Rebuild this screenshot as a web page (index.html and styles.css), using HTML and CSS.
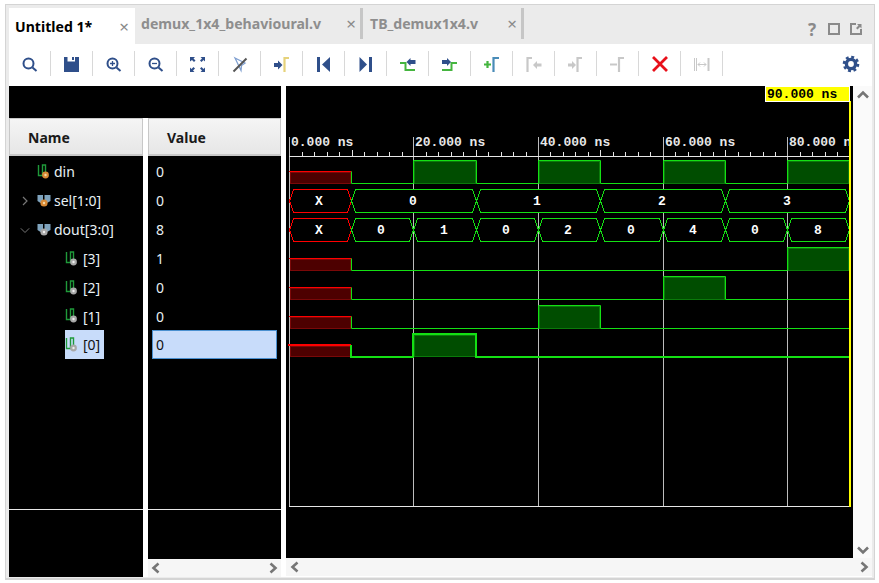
FILE: index.html
```html
<!DOCTYPE html>
<html lang="en">
<head>
  <meta charset="UTF-8">
  <title>Untitled 1</title>
  <link rel="stylesheet" href="styles.css">
</head>
<body>
  <svg class="defs">
    <symbol id="sig-v" viewBox="0 0 14 16">
      <path d="M1.5 1V11.5H5.5V1H8.5V8" fill="none" stroke="#1f9a3a" stroke-width="1.4"/>
      <circle cx="8.5" cy="11" r="3.4" fill="#d98a35"/>
      <circle cx="8.5" cy="11" r="1.2" fill="#f4d9a8"/>
    </symbol>
    <symbol id="sig-g" viewBox="0 0 14 16">
      <path d="M1.5 1V11.5H5.5V1H8.5V8" fill="none" stroke="#1f9a3a" stroke-width="1.4"/>
      <circle cx="8.5" cy="11" r="3.4" fill="#a8a8a8"/>
      <circle cx="8.5" cy="11" r="1.2" fill="#efefef"/>
    </symbol>
    <symbol id="bus-v" viewBox="0 0 14 14">
      <path d="M0.5 1H6V6H7.5V1H13.5V7L10 9H3.5L0.5 7Z" fill="#7fa3bd"/>
      <circle cx="7" cy="9" r="3.6" fill="#d98a35"/>
      <circle cx="7" cy="9" r="1.2" fill="#f4d9a8"/>
    </symbol>
    <symbol id="bus-g" viewBox="0 0 14 14">
      <path d="M0.5 1H6V6H7.5V1H13.5V7L10 9H3.5L0.5 7Z" fill="#7fa3bd"/>
      <circle cx="7" cy="9" r="3.6" fill="#a8a8a8"/>
      <circle cx="7" cy="9" r="1.2" fill="#efefef"/>
    </symbol>
  </svg>

  <div class="window">
    <div class="tabs">
      <div class="tab active"><span class="tab-name">Untitled 1*</span><span class="tab-x">×</span></div>
      <div class="tab second"><span class="tab-name">demux_1x4_behavioural.v</span><span class="tab-x">×</span></div>
      <div class="tab third"><span class="tab-name">TB_demux1x4.v</span><span class="tab-x">×</span></div>
      <div class="tab-tools">
        <span class="help">?</span>
        <svg width="14" height="14" viewBox="0 0 14 14"><rect x="2" y="2" width="10" height="10" fill="none" stroke="#8a8a8a" stroke-width="2"/></svg>
        <svg width="14" height="14" viewBox="0 0 14 14"><path d="M7 2H2V12H12V7" fill="none" stroke="#8a8a8a" stroke-width="2"/><path d="M8 2H12.5V6.5L11 5L8.5 7.5L7 6L9.5 3.5Z" fill="#8a8a8a"/></svg>
      </div>
    </div>

    <div class="toolbar">
      <div class="tool">
        <svg viewBox="0 0 20 20"><circle cx="8.5" cy="9.5" r="5" class="navy-line"/><path d="M12.5 13.5L16.5 17" class="navy-line"/></svg>
      </div>
      <div class="tool">
        <svg viewBox="0 0 20 20"><path d="M2 3H5.5V7.5H13V3H17V18H2Z" class="navy"/><rect x="10" y="3" width="2" height="3" class="navy"/></svg>
      </div>
      <div class="tool">
        <svg viewBox="0 0 20 20"><circle cx="8.5" cy="9.5" r="5" class="navy-line"/><path d="M12.5 13.5L16.5 17" class="navy-line"/><path d="M6 9.5H11M8.5 7V12" fill="none" stroke="#2f4f8a" stroke-width="1.3"/></svg>
      </div>
      <div class="tool">
        <svg viewBox="0 0 20 20"><circle cx="8.5" cy="9.5" r="5" class="navy-line"/><path d="M12.5 13.5L16.5 17" class="navy-line"/><path d="M6 9.5H11" fill="none" stroke="#2f4f8a" stroke-width="1.3"/></svg>
      </div>
      <div class="tool">
        <svg viewBox="0 0 20 20"><path d="M2 3H7L5.5 4.5L7.5 6.5L6 8L4 6L2 7.5ZM17 3V7.5L15.5 6L13.5 8L12 6.5L14 4.5L12.5 3ZM2 18V13.5L3.5 15L5.5 13L7 14.5L5 16.5L6.5 18ZM17 18H12.5L14 16.5L12 14.5L13.5 13L15.5 15L17 13.5Z" class="navy"/></svg>
      </div>
      <div class="tool">
        <svg viewBox="0 0 20 20"><path d="M5 4L15 9L11.5 11.5L11 16.5Z" fill="none" stroke="#7f9fd0" stroke-width="1.3"/><path d="M3.5 17.5L16.5 4.5" fill="none" stroke="#555" stroke-width="2"/></svg>
      </div>
      <div class="tool">
        <svg viewBox="0 0 20 20"><path d="M2 9H6V6.5L10.5 11L6 15.5V13H2Z" class="navy"/><path d="M12.5 18V4H17" fill="none" stroke="#e6d27a" stroke-width="2.2"/></svg>
      </div>
      <div class="tool">
        <svg viewBox="0 0 20 20"><rect x="3" y="3" width="3" height="15" class="navy"/><path d="M16 3V18L8 10.5Z" class="navy"/></svg>
      </div>
      <div class="tool">
        <svg viewBox="0 0 20 20"><path d="M3.5 3V18L11 10.5Z" class="navy"/><rect x="13" y="3" width="3" height="15" class="navy"/></svg>
      </div>
      <div class="tool">
        <svg viewBox="0 0 20 20"><path d="M2 9H7.5V16H17" fill="none" stroke="#45b53f" stroke-width="2"/><path d="M8.5 8L12.5 4V6H17.5V10H12.5V12Z" class="navy"/></svg>
      </div>
      <div class="tool">
        <svg viewBox="0 0 20 20"><path d="M2 16H11.5V9H17" fill="none" stroke="#45b53f" stroke-width="2"/><path d="M2 6H7V4L11 8L7 12V10H2Z" class="navy"/></svg>
      </div>
      <div class="tool">
        <svg viewBox="0 0 20 20"><path d="M2 10.5H9M5.5 7V14" fill="none" stroke="#45b53f" stroke-width="2.2"/><path d="M11.5 18V4H17" fill="none" stroke="#4a8cb8" stroke-width="2.2"/></svg>
      </div>
      <div class="tool">
        <svg viewBox="0 0 20 20"><path d="M3.5 18V4H8" fill="none" stroke="#c8c8c8" stroke-width="2.2"/><path d="M17.5 9.5H13V7L9 11L13 15V12.5H17.5Z" fill="#c8c8c8"/></svg>
      </div>
      <div class="tool">
        <svg viewBox="0 0 20 20"><path d="M2 9.5H6V7L10 11L6 15V12.5H2Z" fill="#c8c8c8"/><path d="M11.5 18V4H16" fill="none" stroke="#c8c8c8" stroke-width="2.2"/></svg>
      </div>
      <div class="tool">
        <svg viewBox="0 0 20 20"><path d="M2 10.5H9" fill="none" stroke="#c8c8c8" stroke-width="2"/><path d="M11 18V4H16" fill="none" stroke="#c8c8c8" stroke-width="2.2"/></svg>
      </div>
      <div class="tool">
        <svg viewBox="0 0 20 20"><path d="M3 3L17 17M17 3L3 17" fill="none" stroke="#e8101a" stroke-width="2.8"/></svg>
      </div>
      <div class="tool">
        <svg viewBox="0 0 20 20"><path d="M2.5 4V17M4.5 4V17" fill="none" stroke="#c8c8c8" stroke-width="1"/><path d="M6 10.5H14M6 10.5L8 8.5M6 10.5L8 12.5M14 10.5L12 8.5M14 10.5L12 12.5" fill="none" stroke="#c8c8c8" stroke-width="1"/><path d="M16.5 4V17" fill="none" stroke="#c8c8c8" stroke-width="2"/></svg>
      </div>
      <div class="tool-gear">
        <svg width="20" height="20" viewBox="0 0 20 20">
          <circle cx="10" cy="10" r="4.6" fill="none" stroke="#2f4f8a" stroke-width="3.4"/>
          <circle cx="10" cy="10" r="7" fill="none" stroke="#2f4f8a" stroke-width="2.6" stroke-dasharray="2.9 2.6"/>
        </svg>
      </div>
    </div>

    <div class="main">
      <div class="left-pane">
        <div class="top-strip"></div>
        <div class="columns">
          <div class="col name-col">
            <div class="col-head">Name</div>
            <div class="rows">
              <div class="row lvl-0"><span class="arrow"></span><svg class="sig"><use href="#sig-v"/></svg><span class="label">din</span></div>
              <div class="row lvl-0"><span class="arrow"><svg width="10" height="12" viewBox="0 0 10 12"><path d="M3 2L7 6L3 10" class="chev-thin"/></svg></span><svg class="sig"><use href="#bus-v"/></svg><span class="label">sel[1:0]</span></div>
              <div class="row lvl-0"><span class="arrow"><svg width="12" height="10" viewBox="0 0 12 10"><path d="M1 3L6 8L11 3" class="chev-thin"/></svg></span><svg class="sig"><use href="#bus-g"/></svg><span class="label">dout[3:0]</span></div>
              <div class="row lvl-1"><svg class="sig"><use href="#sig-g"/></svg><span class="label">[3]</span></div>
              <div class="row lvl-1"><svg class="sig"><use href="#sig-g"/></svg><span class="label">[2]</span></div>
              <div class="row lvl-1"><svg class="sig"><use href="#sig-g"/></svg><span class="label">[1]</span></div>
              <div class="row lvl-1"><div class="picked"><svg class="sig"><use href="#sig-g"/></svg><span class="label">[0]</span></div></div>
            </div>
            <div class="col-foot name-foot"></div>
          </div>
          <div class="col value-col">
            <div class="col-head">Value</div>
            <div class="rows">
              <div class="row value">0</div>
              <div class="row value">0</div>
              <div class="row value">8</div>
              <div class="row value">1</div>
              <div class="row value">0</div>
              <div class="row value">0</div>
              <div class="row value picked-value">0</div>
            </div>
            <div class="col-foot value-foot"></div>
            <div class="hscroll">
              <svg width="12" height="14" viewBox="0 0 12 14"><path d="M8.5 2.5L3.5 7L8.5 11.5" class="chev"/></svg>
              <svg width="12" height="14" viewBox="0 0 12 14"><path d="M3.5 2.5L8.5 7L3.5 11.5" class="chev"/></svg>
            </div>
          </div>
        </div>
      </div>

      <div class="right-pane">
        <div class="wave-area">
          <svg class="wave" viewBox="286 86 567 472">
            <defs>
              <clipPath id="inside"><rect x="286" y="86" width="563" height="472"/></clipPath>
            </defs>

            <path class="grid" d="M289.5 137V506M413.5 137V506M538.5 137V506M663.5 137V506M787.5 137V506"/>
            <path class="frame" d="M289 506.5H850M289 156.5H850"/>
            <path class="frame" d="M302.5 152V156M314.5 152V156M327.5 152V156M339.5 152V156M352.5 150V156M364.5 152V156M377.5 152V156M389.5 152V156M402.5 152V156
              M426.5 152V156M438.5 152V156M451.5 152V156M463.5 152V156M476.5 150V156M488.5 152V156M501.5 152V156M513.5 152V156M526.5 152V156
              M550.5 152V156M563.5 152V156M575.5 152V156M588.5 152V156M600.5 150V156M613.5 152V156M625.5 152V156M638.5 152V156M650.5 152V156
              M675.5 152V156M688.5 152V156M700.5 152V156M713.5 152V156M725.5 150V156M738.5 152V156M750.5 152V156M763.5 152V156M775.5 152V156
              M800.5 152V156M812.5 152V156M825.5 152V156M837.5 152V156"/>

            <g class="time" clip-path="url(#inside)">
              <text x="291" y="146">0.000 ns</text>
              <text x="415" y="146">20.000 ns</text>
              <text x="540" y="146">40.000 ns</text>
              <text x="665" y="146">60.000 ns</text>
              <text x="789" y="146">80.000 ns</text>
            </g>

            <!-- din -->
            <rect class="red-fill" x="290.5" y="172.5" width="60" height="11"/>
            <path class="red-line" d="M289 171.5H351.5"/>
            <rect class="green-fill" x="414.5" y="161.5" width="61" height="22"/>
            <rect class="green-fill" x="539.5" y="161.5" width="60" height="22"/>
            <rect class="green-fill" x="664.5" y="161.5" width="60" height="22"/>
            <rect class="green-fill" x="788.5" y="161.5" width="60" height="22"/>
            <path class="green-line" d="M351.5 171.5V183.5H413.5V160.5H476.5V183.5H538.5V160.5H600.5V183.5H663.5V160.5H725.5V183.5H787.5V160.5H849"/>

            <!-- sel[1:0] -->
            <path class="red-bus" d="M289.5 201L293.5 189.5H347.5L351.5 201L347.5 212.5H293.5Z"/>
            <path class="green-bus" d="M351.5 201L355.5 189.5H472.5L476.5 201L472.5 212.5H355.5Z"/>
            <path class="green-bus" d="M476.5 201L480.5 189.5H596.5L600.5 201L596.5 212.5H480.5Z"/>
            <path class="green-bus" d="M600.5 201L604.5 189.5H721.5L725.5 201L721.5 212.5H604.5Z"/>
            <path class="green-bus" d="M725.5 201L729.5 189.5H845.5L849.5 201L845.5 212.5H729.5Z"/>
            <g class="bus-text">
              <text x="319" y="205">X</text>
              <text x="413" y="205">0</text>
              <text x="537" y="205">1</text>
              <text x="662" y="205">2</text>
              <text x="787" y="205">3</text>
            </g>

            <!-- dout[3:0] -->
            <path class="red-bus" d="M289.5 230L293.5 218.5H347.5L351.5 230L347.5 241.5H293.5Z"/>
            <path class="green-bus" d="M351.5 230L355.5 218.5H409.5L413.5 230L409.5 241.5H355.5Z"/>
            <path class="green-bus" d="M413.5 230L417.5 218.5H472.5L476.5 230L472.5 241.5H417.5Z"/>
            <path class="green-bus" d="M476.5 230L480.5 218.5H534.5L538.5 230L534.5 241.5H480.5Z"/>
            <path class="green-bus" d="M538.5 230L542.5 218.5H596.5L600.5 230L596.5 241.5H542.5Z"/>
            <path class="green-bus" d="M600.5 230L604.5 218.5H659.5L663.5 230L659.5 241.5H604.5Z"/>
            <path class="green-bus" d="M663.5 230L667.5 218.5H721.5L725.5 230L721.5 241.5H667.5Z"/>
            <path class="green-bus" d="M725.5 230L729.5 218.5H783.5L787.5 230L783.5 241.5H729.5Z"/>
            <path class="green-bus" d="M787.5 230L791.5 218.5H845.5L849.5 230L845.5 241.5H791.5Z"/>
            <g class="bus-text">
              <text x="319" y="234">X</text>
              <text x="381" y="234">0</text>
              <text x="444" y="234">1</text>
              <text x="506" y="234">0</text>
              <text x="568" y="234">2</text>
              <text x="631" y="234">0</text>
              <text x="693" y="234">4</text>
              <text x="755" y="234">0</text>
              <text x="818" y="234">8</text>
            </g>

            <!-- [3] -->
            <rect class="red-fill" x="290.5" y="259.5" width="60" height="11"/>
            <path class="red-line" d="M289 258.5H351.5"/>
            <rect class="green-fill" x="788.5" y="248.5" width="60" height="22"/>
            <path class="green-line" d="M351.5 258.5V270.5H787.5V247.5H849"/>

            <!-- [2] -->
            <rect class="red-fill" x="290.5" y="288.5" width="60" height="11"/>
            <path class="red-line" d="M289 287.5H351.5"/>
            <rect class="green-fill" x="664.5" y="277.5" width="60" height="22"/>
            <path class="green-line" d="M351.5 287.5V299.5H663.5V276.5H725.5V299.5H849"/>

            <!-- [1] -->
            <rect class="red-fill" x="290.5" y="317.5" width="60" height="11"/>
            <path class="red-line" d="M289 316.5H351.5"/>
            <rect class="green-fill" x="539.5" y="306.5" width="60" height="22"/>
            <path class="green-line" d="M351.5 316.5V328.5H538.5V305.5H600.5V328.5H849"/>

            <!-- [0] selected, drawn heavier -->
            <rect class="red-fill" x="290.5" y="346.5" width="60" height="10"/>
            <path class="red-line thick" d="M288 345H351"/>
            <rect class="green-fill" x="414.5" y="335.5" width="61" height="21"/>
            <path class="green-line thick" d="M351 345V357H413V334H476V357H849"/>

            <rect class="cursor-line" x="849" y="101" width="2" height="406"/>
            <rect class="cursor-box" x="765.5" y="86.5" width="84" height="15"/>
            <text class="cursor-text" x="767" y="98">90.000 ns</text>
          </svg>
        </div>
        <div class="vscroll">
          <svg width="14" height="12" viewBox="0 0 14 12"><path d="M2 8.5L7 3.5L12 8.5" class="chev"/></svg>
          <svg width="14" height="12" viewBox="0 0 14 12"><path d="M2 3.5L7 8.5L12 3.5" class="chev"/></svg>
        </div>
        <div class="hscroll wide">
          <svg width="12" height="14" viewBox="0 0 12 14"><path d="M8.5 2.5L3.5 7L8.5 11.5" class="chev"/></svg>
          <svg width="12" height="14" viewBox="0 0 12 14"><path d="M3.5 2.5L8.5 7L3.5 11.5" class="chev"/></svg>
        </div>
      </div>
    </div>
  </div>
</body>
</html>
```

FILE: styles.css
```css
html, body {
  margin: 0;
  padding: 0;
  background: #fff;
}

body {
  font-family: "Noto Sans", sans-serif;
  font-size: 14px;
}

.defs {
  display: none;
}

.window {
  box-sizing: border-box;
  width: 870px;
  height: 576px;
  margin: 4px 0 0 5px;
  padding: 0 2px 2px 3px;
  background: #ebebeb;
  border: 1px solid #d4d4d4;
  border-bottom: 2px solid #d4d4d4;
}

/* tabs */
.tabs {
  display: flex;
  height: 39px;
  padding-top: 3px;
  box-sizing: border-box;
}

.tab {
  display: flex;
  align-items: center;
  justify-content: space-between;
  box-sizing: border-box;
  height: 36px;
  padding: 0 4px 0 6px;
  font-weight: bold;
  color: #8e8e8e;
}

.tab-name {
  font-size: 14.1px;
}

.tab-x {
  font-weight: normal;
  font-size: 17px;
  color: #8a8a8a;
}

.tab.active {
  width: 126px;
  padding-right: 6px;
  background: #fff;
  color: #000;
}

.tab.second {
  width: 228px;
}

.tab.third {
  width: 161px;
  padding-left: 7px;
}

.tab.second, .tab.third {
  height: 31px;
  border-right: 3px solid #c6c6c6;
}

.tab-tools {
  display: flex;
  align-items: center;
  gap: 8px;
  margin: 6px 9px 0 auto;
  height: 30px;
}

.help {
  width: 14px;
  text-align: center;
  font-size: 17px;
  font-weight: bold;
  color: #8a8a8a;
}

/* toolbar */
.toolbar {
  display: flex;
  align-items: center;
  height: 39px;
  background: #fff;
}

.tool {
  display: flex;
  align-items: center;
  justify-content: center;
  box-sizing: border-box;
  width: 42px;
  height: 25px;
  border-right: 1px solid #d8d8d8;
}

.tool svg {
  width: 20px;
  height: 20px;
}

.tool-gear {
  display: flex;
  margin: 0 11px 0 auto;
}

.navy {
  fill: #2f4f8a;
}

.navy-line {
  fill: none;
  stroke: #2f4f8a;
  stroke-width: 2;
}

/* main area */
.main {
  display: flex;
  height: 494px;
  padding-top: 3px;
  box-sizing: border-box;
  background: #fff;
}

.left-pane {
  width: 272px;
  display: flex;
  flex-direction: column;
}

.top-strip {
  height: 32px;
  background: #000;
}

.columns {
  display: flex;
  gap: 5px;
  flex: 1;
}

.col {
  display: flex;
  flex-direction: column;
  background: #000;
}

.name-col {
  width: 134px;
}

.value-col {
  width: 133px;
}

.col-head {
  box-sizing: border-box;
  height: 38px;
  display: flex;
  align-items: center;
  padding: 1px 0 0 18px;
  font-weight: bold;
  color: #1a1a1a;
  background: linear-gradient(#f5f5f5, #e6e6e6);
  border: 1px solid #c8c8c8;
  border-width: 1px 1px 2px 1px;
}

.rows {
  padding-top: 1px;
}

.row {
  display: flex;
  align-items: center;
  height: 29px;
  color: #e8f0f4;
}

.row:nth-child(6) {
  height: 28px;
}

.lvl-0 {
  padding-left: 11px;
}

.lvl-1 {
  padding-left: 56px;
}

.arrow {
  display: flex;
  justify-content: center;
  width: 10px;
  margin-right: 7px;
}

.sig {
  width: 14px;
  height: 16px;
  flex: none;
}

.label {
  margin-left: 3px;
}

.lvl-1 .label {
  margin-left: 4px;
}

.picked {
  display: flex;
  align-items: center;
  height: 100%;
  padding-right: 4px;
  color: #111;
  background: #c8dcfa;
}

.value {
  padding-left: 8px;
}

.picked-value {
  box-sizing: border-box;
  width: 125px;
  margin-left: 4px;
  padding-left: 3px;
  color: #111;
  background: #c8dcfa;
  border: 1px solid #4a90d0;
}

.col-foot {
  margin-top: auto;
  border-top: 1px solid #e8e8e8;
}

.name-foot {
  height: 67px;
}

.value-foot {
  height: 49px;
}

/* scrollbars */
.hscroll {
  display: flex;
  align-items: center;
  justify-content: space-between;
  height: 18px;
  padding: 0 2px;
  background: #f6f6f6;
}

.chev {
  fill: none;
  stroke: #767676;
  stroke-width: 2.6;
}

.chev-thin {
  fill: none;
  stroke: #777;
  stroke-width: 1.2;
}

.right-pane {
  margin-left: 5px;
  flex: 1;
  display: grid;
  grid-template-columns: 567px 1fr;
  grid-template-rows: 472px 1fr;
}

.wave-area {
  background: #000;
  height: 472px;
}

.wave {
  display: block;
  width: 567px;
  height: 472px;
}

.vscroll {
  display: flex;
  flex-direction: column;
  align-items: center;
  justify-content: space-between;
  padding: 3px 0 2px;
  background: #fafafa;
}

.hscroll.wide {
  grid-column: 1 / 3;
  padding: 0 2px 0 3px;
}

/* waveform drawing */
.grid {
  fill: none;
  stroke: #bdbdbd;
  stroke-width: 1;
}

.frame {
  fill: none;
  stroke: #e6e6e6;
  stroke-width: 1;
}

.time text {
  font-family: "Liberation Mono", monospace;
  font-weight: bold;
  font-size: 13px;
  fill: #e8e8e8;
}

.red-fill {
  fill: #4d0000;
  stroke: #7a0808;
}

.green-fill {
  fill: #004d00;
  stroke: #0a7a0a;
}

.red-line {
  fill: none;
  stroke: #ff0000;
  stroke-width: 1;
}

.green-line {
  fill: none;
  stroke: #14e014;
  stroke-width: 1;
}

.thick {
  stroke-width: 2;
}

.red-bus {
  fill: #000;
  stroke: #ff0000;
  stroke-width: 1;
  shape-rendering: crispEdges;
}

.green-bus {
  fill: #000;
  stroke: #14e014;
  stroke-width: 1;
  shape-rendering: crispEdges;
}

.bus-text text {
  font-family: "Liberation Mono", monospace;
  font-weight: bold;
  font-size: 13px;
  fill: #fff;
  text-anchor: middle;
}

.cursor-line {
  fill: #ffff00;
}

.cursor-box {
  fill: #ffff00;
  stroke: #fff;
}

.cursor-text {
  font-family: "Liberation Mono", monospace;
  font-weight: bold;
  font-size: 13px;
  fill: #000;
}
```
